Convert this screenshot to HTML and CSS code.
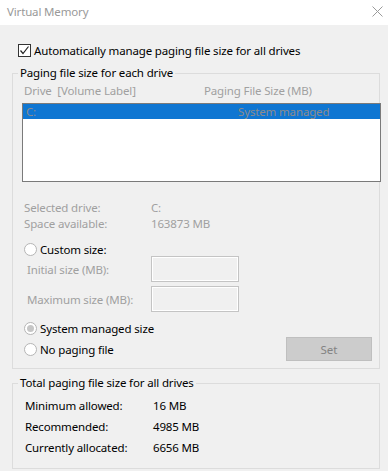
FILE: index.html
```html
<!DOCTYPE html>
<html lang="en">
  <head>
    <meta charset="UTF-8" />
    <meta name="viewport" content="width=device-width, initial-scale=1.0" />
    <title>Virtual Memory</title>
    <link rel="stylesheet" href="styles.css">
  </head>
  <body>
    <div class="ventana">
      <div class="barraTitulo">
        <span class="titulo">Virtual Memory</span>
        <!-- boton cerrar -->
        <svg class="cerrar" width="11" height="11" viewBox="0 0 11 11">
          <path d="M0.5 0.5 L10.5 10.5 M10.5 0.5 L0.5 10.5" stroke="#9a9a9a" stroke-width="1" fill="none" />
        </svg>
      </div>

      <div class="contenido">
        <div class="filaCheck">
          <span class="checkbox">
            <svg width="11" height="11" viewBox="0 0 11 11">
              <path d="M1.5 5.5 L4 8.5 L9.5 1.5" stroke="#222" stroke-width="1.2" fill="none" />
            </svg>
          </span>
          Automatically manage paging file size for all drives
        </div>

        <fieldset class="grupo grupoDrives">
          <legend>Paging file size for each drive</legend>
          <div class="cabeceraLista deshabilitado">
            <span class="colDrive">Drive&nbsp;&nbsp;[Volume Label]</span>
            <span class="colSize">Paging File Size (MB)</span>
          </div>
          <div class="lista">
            <div class="filaLista seleccionada">
              <span class="colDrive">C:</span>
              <span class="colSize">System managed</span>
            </div>
          </div>

          <div class="info deshabilitado">
            <div class="filaInfo"><span class="etiqueta">Selected drive:</span><span>C:</span></div>
            <div class="filaInfo"><span class="etiqueta">Space available:</span><span>163873 MB</span></div>
          </div>

          <div class="opcion opcionCustom">
            <span class="radio"></span>Custom size:
          </div>
          <div class="filaTamano deshabilitado">
            <span class="etiquetaTamano">Initial size (MB):</span>
            <span class="cajaTexto"></span>
          </div>
          <div class="filaTamano filaMax deshabilitado">
            <span class="etiquetaTamano">Maximum size (MB):</span>
            <span class="cajaTexto"></span>
          </div>

          <div class="opcion opcionSistema">
            <span class="radio marcado"></span>System managed size
          </div>
          <div class="filaBoton">
            <div class="opcion">
              <span class="radio"></span>No paging file
            </div>
            <button class="botonSet" disabled>Set</button>
          </div>
        </fieldset>

        <fieldset class="grupo grupoTotal">
          <legend>Total paging file size for all drives</legend>
          <div class="filaTotal"><span class="etiquetaTotal">Minimum allowed:</span><span>16 MB</span></div>
          <div class="filaTotal"><span class="etiquetaTotal">Recommended:</span><span>4985 MB</span></div>
          <div class="filaTotal"><span class="etiquetaTotal">Currently allocated:</span><span>6656 MB</span></div>
        </fieldset>
      </div>
    </div>
  </body>
</html>
```

FILE: styles.css
```css
body {
  margin: 0;
  background: #f0f0f0;
  font-family: "Noto Sans", "Open Sans", sans-serif;
  font-size: 11.5px;
  letter-spacing: -0.15px;
  color: #000;
}

.ventana {
  width: 388px;
  height: 471px;
  overflow: hidden;
}

/* barra de titulo */
.barraTitulo {
  height: 25px;
  box-sizing: border-box;
  background: #fff;
  display: flex;
  align-items: center;
  justify-content: space-between;
  padding: 0 5px 3px 7px;
}
.titulo {
  color: #999;
}

.contenido {
  padding: 0 0 0 12px;
}

.filaCheck {
  display: flex;
  align-items: center;
  height: 16px;
  margin-top: 17px;
  padding-left: 6px;
}
.checkbox {
  width: 11px;
  height: 11px;
  border: 1px solid #333;
  background: #fff;
  margin-right: 3px;
  display: flex;
}

/* grupos */
.grupo {
  margin: 0;
  padding: 0;
  width: 366px;
  border: 1px solid #dcdcdc;
  min-width: 0;
}
.grupo legend {
  margin-left: 5px;
  padding: 0 2px;
  line-height: 16px;
}
.grupoDrives {
  margin-top: 7px;
  padding-bottom: 7px;
}
.grupoTotal {
  margin-top: 6px;
  padding-bottom: 10px;
}

.deshabilitado {
  color: #a0a0a0;
}

.cabeceraLista,
.filaLista {
  display: flex;
  line-height: 16px;
}
.cabeceraLista {
  margin-top: 2px;
  padding-left: 11px;
}
.cabeceraLista .colDrive {
  width: 180px;
}

.lista {
  margin: 4px 0 0 9px;
  width: 357px;
  height: 77px;
  border: 1px solid #7a7a7a;
  background: #fff;
}
.filaLista {
  height: 15px;
  line-height: 15px;
  padding-left: 3px;
}
.seleccionada {
  background: #0f76d2;
  color: #8c8c8c;
}
.filaLista .colDrive {
  width: 212px;
}

.info {
  margin-top: 18px;
  padding-left: 11px;
}
.filaInfo {
  line-height: 16px;
  display: flex;
}
.etiqueta {
  width: 127px;
}

/* opciones */
.opcion {
  display: flex;
  align-items: center;
  height: 14px;
  padding-left: 11px;
}
.opcionCustom {
  margin-top: 10px;
}
.radio {
  width: 11px;
  height: 11px;
  border: 1px solid #b5b5b5;
  border-radius: 50%;
  background: #fff;
  margin-right: 3px;
  display: flex;
  align-items: center;
  justify-content: center;
}
.radio.marcado::after {
  content: "";
  width: 7px;
  height: 7px;
  border-radius: 50%;
  background: #c6c6c6;
}

.filaTamano {
  display: flex;
  align-items: center;
  height: 26px;
  padding-left: 14px;
}
.filaMax {
  margin-top: 4px;
}
.etiquetaTamano {
  width: 124px;
}
.cajaTexto {
  width: 86px;
  height: 24px;
  border: 1px solid #c4c4c4;
  box-shadow: inset 0 0 0 1px #fff;
  background: #f0f0f0;
}

.opcionSistema {
  margin-top: 9px;
}
.filaBoton {
  display: flex;
  align-items: center;
  justify-content: space-between;
  height: 24px;
  margin-top: 2px;
  padding-right: 7px;
}
.filaBoton .opcion {
  padding-left: 11px;
}
.botonSet {
  width: 86px;
  height: 24px;
  background: #cccccc;
  border: 1px solid #bfbfbf;
  color: #838383;
  font-family: inherit;
  font-size: inherit;
}

.filaTotal {
  display: flex;
  line-height: 21px;
  padding-left: 12px;
}
.filaTotal:first-of-type {
  margin-top: 4px;
}
.etiquetaTotal {
  width: 128px;
}
```
